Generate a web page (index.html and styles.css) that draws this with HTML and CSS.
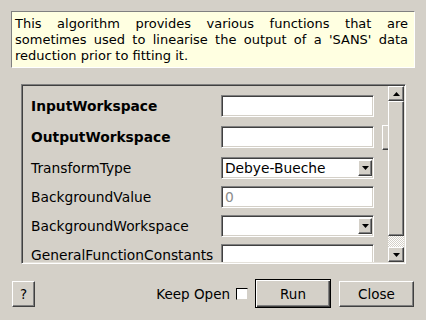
FILE: index.html
```html
<!DOCTYPE html>
<html lang="en">
<head>
    <meta charset="UTF-8">
    <title>ApplySANSLinearisation</title>
    <link rel="stylesheet" href="styles.css">
</head>
<body>
    <div class="dialog">
        <!-- Descripción del algoritmo -->
        <div class="desc">This algorithm provides various functions that are sometimes used to linearise the output of a 'SANS' data reduction prior to fitting it.</div>

        <!-- Propiedades -->
        <div class="frame">
            <div class="props">
                <div class="row bold">
                    <label for="in_ws">InputWorkspace</label>
                    <input type="text" id="in_ws" class="field">
                </div>
                <div class="row bold">
                    <label for="out_ws">OutputWorkspace</label>
                    <input type="text" id="out_ws" class="field">
                    <span class="btn browse"></span>
                </div>
                <div class="row">
                    <label>TransformType</label>
                    <div class="field combo">
                        <span>Debye-Bueche</span>
                        <span class="drop"><svg width="7" height="4" viewBox="0 0 7 4"><polygon points="0,0 7,0 3.5,4" fill="#000"/></svg></span>
                    </div>
                </div>
                <div class="row">
                    <label for="bg_value">BackgroundValue</label>
                    <input type="text" id="bg_value" class="field" placeholder="0">
                </div>
                <div class="row">
                    <label>BackgroundWorkspace</label>
                    <div class="field combo">
                        <span></span>
                        <span class="drop"><svg width="7" height="4" viewBox="0 0 7 4"><polygon points="0,0 7,0 3.5,4" fill="#000"/></svg></span>
                    </div>
                </div>
                <div class="row">
                    <label for="gf_const">GeneralFunctionConstants</label>
                    <input type="text" id="gf_const" class="field">
                </div>
            </div>
            <div class="vscroll">
                <span class="sb-btn"><svg width="7" height="4" viewBox="0 0 7 4"><polygon points="0,4 7,4 3.5,0" fill="#000"/></svg></span>
                <span class="sb-handle"></span>
                <span class="sb-track"></span>
                <span class="sb-btn"><svg width="7" height="4" viewBox="0 0 7 4"><polygon points="0,0 7,0 3.5,4" fill="#000"/></svg></span>
            </div>
        </div>

        <!-- Botones -->
        <div class="buttons">
            <button class="btn help">?</button>
            <label class="keep" for="keep_open">Keep Open</label>
            <input type="checkbox" id="keep_open" class="check">
            <button class="btn run">Run</button>
            <button class="btn close">Close</button>
        </div>
    </div>
</body>
</html>
```

FILE: styles.css
```css
body {
    margin: 0;
    background: #d4d0c8;
    font-family: "DejaVu Sans", sans-serif;
    font-size: 13px;
    color: #000;
}
.dialog {
    width: 426px;
    height: 320px;
    padding-top: 11px;
    box-sizing: border-box;
    overflow: hidden;
}
.desc {
    margin: 0 11px;
    height: 48px;
    padding: 4px 6px 3px 3px;
    background: #ffffe1;
    border: 1px solid;
    border-color: #808080 #fff #fff #808080;
    line-height: 16px;
    text-align: justify;
}
.frame {
    display: flex;
    margin: 16px 0 0 21px;
    width: 385px;
    height: 180px;
    box-sizing: border-box;
    border: 1px solid;
    border-color: #808080 #fff #fff #808080;
    padding: 1px;
    box-shadow: inset 1px 1px #404040, inset -1px -1px #e4e1da;
}
.props {
    flex: 1;
    overflow: hidden;
    padding: 9px 0 0 8px;
    display: flex;
    flex-direction: column;
    gap: 7px;
    font-size: 13.8px;
}
.row {
    display: flex;
    align-items: center;
    height: 22px;
    flex: none;
}
.row.bold {
    font-weight: bold;
    margin-bottom: 2px;
}
.row label {
    width: 190px;
    flex: none;
}
.field {
    width: 153px;
    height: 22px;
    flex: none;
    box-sizing: border-box;
    margin: 0;
    padding: 0 3px;
    border: 1px solid;
    border-color: #808080 #fff #fff #808080;
    box-shadow: inset 1px 1px #404040, inset -1px -1px #d4d0c8;
    background: #fff;
    font: inherit;
    font-weight: normal;
    color: #000;
    outline: none;
}
.field::placeholder {
    color: #8c8c8c;
}
.combo {
    display: flex;
    align-items: center;
    justify-content: space-between;
    padding: 0 1px 0 3px;
}
.drop {
    display: flex;
    align-items: center;
    justify-content: center;
    width: 14px;
    height: 16px;
    box-sizing: border-box;
    background: #d4d0c8;
    border: 1px solid;
    border-color: #fff #404040 #404040 #fff;
    box-shadow: inset -1px -1px #808080;
}
.btn {
    display: flex;
    align-items: center;
    justify-content: center;
    box-sizing: border-box;
    background: #d4d0c8;
    border: 1px solid;
    border-color: #fff #404040 #404040 #fff;
    box-shadow: inset -1px -1px #808080;
    font: inherit;
    color: #000;
    padding: 0;
}
.browse {
    flex: none;
    width: 20px;
    height: 25px;
    margin-left: 8px;
}
.vscroll {
    width: 16px;
    flex: none;
    display: flex;
    flex-direction: column;
}
.sb-btn, .sb-handle {
    box-sizing: border-box;
    background: #d4d0c8;
    border: 1px solid;
    border-color: #fff #404040 #404040 #fff;
    box-shadow: inset -1px -1px #808080;
}
.sb-btn {
    height: 15px;
    display: flex;
    align-items: center;
    justify-content: center;
}
.sb-handle {
    height: 135px;
}
.sb-track {
    height: 11px;
    background: repeating-conic-gradient(#fff 0 25%, #d4d0c8 0 50%) 0 0 / 2px 2px;
}
.buttons {
    display: flex;
    align-items: center;
    height: 29px;
    margin-top: 15px;
    padding: 0 12px;
    font-size: 13.5px;
}
.help {
    width: 23px;
    height: 26px;
}
.keep {
    margin-left: auto;
}
.check {
    appearance: none;
    width: 12px;
    height: 12px;
    margin: 0 0 0 6px;
    box-sizing: border-box;
    background: #fff;
    border: 1px solid;
    border-color: #000 #d4d0c8 #d4d0c8 #000;
}
.run {
    width: 76px;
    height: 29px;
    margin-left: 7px;
    border: 1px solid #000;
    box-shadow: inset 1px 1px #fff, inset -1px -1px #404040, inset -2px -2px #808080;
}
.close {
    width: 75px;
    height: 26px;
    margin-left: 8px;
}
```
